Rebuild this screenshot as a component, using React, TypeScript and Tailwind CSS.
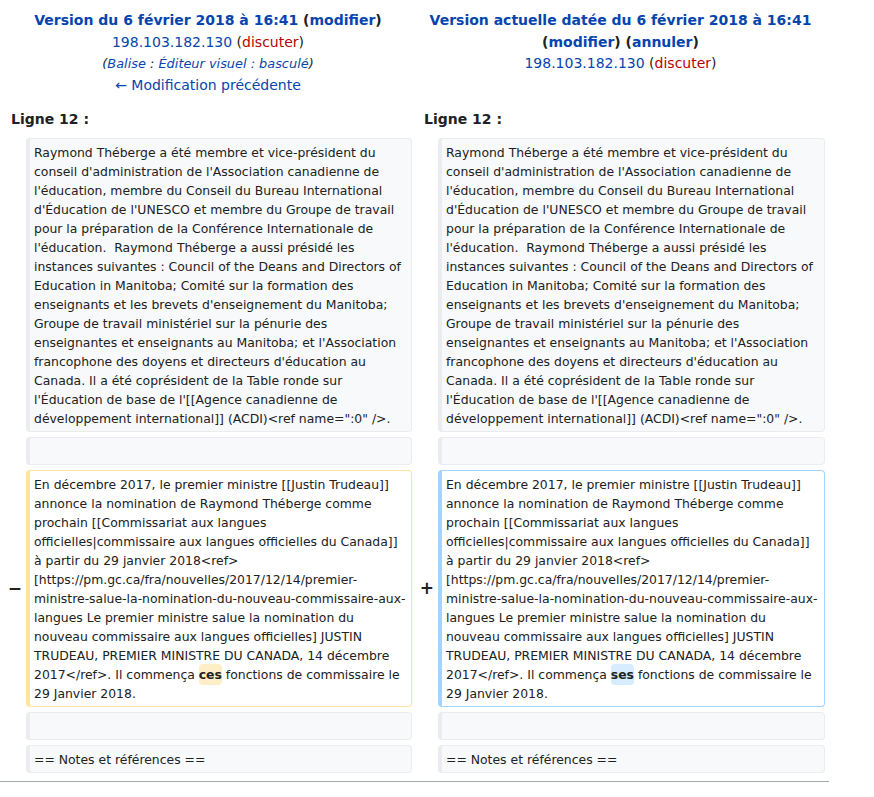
import type { ReactNode } from "react";

const firstPara =
  "Raymond Théberge a été membre et vice-président du conseil d'administration de l'Association canadienne de l'éducation, membre du Conseil du Bureau International d'Éducation de l'UNESCO et membre du Groupe de travail pour la préparation de la Conférence Internationale de l'éducation.  Raymond Théberge a aussi présidé les instances suivantes : Council of the Deans and Directors of Education in Manitoba; Comité sur la formation des enseignants et les brevets d'enseignement du Manitoba; Groupe de travail ministériel sur la pénurie des enseignantes et enseignants au Manitoba; et l'Association francophone des doyens et directeurs d'éducation au Canada. Il a été coprésident de la Table ronde sur l'Éducation de base de l'[[Agence canadienne de développement international]] (ACDI)<ref name=\":0\" />.";

type Kind = "context" | "deleted" | "added";

function Cell({ kind = "context", children }: { kind?: Kind; children?: ReactNode }) {
  const border =
    kind === "deleted"
      ? "border-[#ffe49c] bg-white"
      : kind === "added"
        ? "border-[#a3d3ff] bg-white"
        : "border-[#eaecf0] bg-[#f8f9fa]";
  return (
    <div
      className={`rounded-[4px] border border-l-4 ${border} py-[3.5px] pl-[4px] pr-[4px] text-[12.42px] leading-[19px] text-[#202122] whitespace-pre-wrap break-words`}
    >
      {children ?? <br />}
    </div>
  );
}

function Changed({ kind, children }: { kind: "deleted" | "added"; children: ReactNode }) {
  return (
    <span
      className={`rounded-[4px] py-[3px] font-bold ${
        kind === "deleted" ? "bg-[#feeec8]" : "bg-[#d8ecff]"
      }`}
    >
      {children}
    </span>
  );
}

function ChangedPara({ kind, word }: { kind: "deleted" | "added"; word: string }) {
  return (
    <>
      En décembre 2017, le premier ministre [[Justin Trudeau]] annonce la nomination de Raymond
      Théberge comme prochain [[Commissariat aux langues officielles|commissaire aux langues
      officielles du Canada]] à partir du 29 janvier 2018&lt;ref&gt;
      <wbr />
      [https://pm.gc.ca/fra/nouvelles/2017/12/14/premier-ministre-salue-la-nomination-du-nouveau-commissaire-aux-langues
      Le premier ministre salue la nomination du nouveau commissaire aux langues officielles]
      JUSTIN TRUDEAU, PREMIER MINISTRE DU CANADA, 14 décembre 2017&lt;/ref&gt;. Il commença{" "}
      <Changed kind={kind}>{word}</Changed> fonctions de commissaire le 29 Janvier 2018.
    </>
  );
}

const link = "text-[#0645ad]";
const red = "text-[#ba0000]";

function Marker({ children }: { children?: ReactNode }) {
  return (
    <div className="flex items-center justify-end text-[17px] font-bold text-[#202122]">
      {children}
    </div>
  );
}

export default function App() {
  return (
    <div
      className="min-h-screen bg-white text-[#202122]"
      style={{ fontFamily: '"DejaVu Sans", sans-serif' }}
    >
      <div className="w-[829px] px-[4px] pt-[10px]">
        <div className="grid grid-cols-[18px_386px_18px_387px] gap-x-[4px] gap-y-[5px]">
          {/* header */}
          <div className="col-span-2 pb-[7.4px] text-center text-[14px] leading-[21.7px]">
            <div className="font-bold">
              <span className={link}>Version du 6 février 2018 à 16:41</span> (
              <span className={link}>modifier</span>)
            </div>
            <div>
              <span className={link}>198.103.182.130</span> (<span className={red}>discuter</span>)
            </div>
            <div className="text-[12.9px] italic">
              (<span className={link}>Balise</span> :{" "}
              <span className={link}>Éditeur visuel : basculé</span>)
            </div>
            <div className={link}>← Modification précédente</div>
          </div>
          <div className="col-span-2 text-center text-[14px] leading-[21.7px]">
            <div className="font-bold">
              <span className={link}>Version actuelle datée du 6 février 2018 à 16:41</span>
            </div>
            <div className="font-bold">
              (<span className={link}>modifier</span>) (<span className={link}>annuler</span>)
            </div>
            <div>
              <span className={link}>198.103.182.130</span> (<span className={red}>discuter</span>)
            </div>
          </div>

          {/* line numbers */}
          <div className="col-span-2 pb-[2.3px] pl-[7px] text-[14px] font-bold leading-[21.7px]">
            Ligne 12 :
          </div>
          <div className="col-span-2 pb-[2.3px] pl-[8px] text-[14px] font-bold leading-[21.7px]">
            Ligne 12 :
          </div>

          <Marker />
          <Cell>{firstPara}</Cell>
          <Marker />
          <Cell>{firstPara}</Cell>

          <Marker />
          <Cell />
          <Marker />
          <Cell />

          <Marker>−</Marker>
          <Cell kind="deleted">
            <ChangedPara kind="deleted" word="ces" />
          </Cell>
          <Marker>+</Marker>
          <Cell kind="added">
            <ChangedPara kind="added" word="ses" />
          </Cell>

          <Marker />
          <Cell />
          <Marker />
          <Cell />

          <Marker />
          <Cell>== Notes et références ==</Cell>
          <Marker />
          <Cell>== Notes et références ==</Cell>
        </div>
      </div>
      <div className="mt-[8px] w-[829px] border-t border-[#a2a9b1]" />
    </div>
  );
}
